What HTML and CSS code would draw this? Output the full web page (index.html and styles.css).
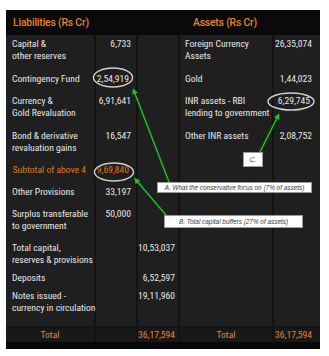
FILE: index.html
```html
<!DOCTYPE html>
<html>
<head>
<meta charset="utf-8">
<link rel="stylesheet" href="styles.css">
</head>
<body>
<div class="sheet">
  <div class="panel">
    <div class="head">
      <div class="h-liab">Liabilities (Rs Cr)</div>
      <div class="h-assets">Assets (Rs Cr)</div>
    </div>
    <div class="grid">
      <div class="c lab">Capital &amp;<br>other reserves</div>
      <div class="c v2">6,733</div>
      <div class="c v3"></div>
      <div class="c lab4">Foreign Currency<br>Assets</div>
      <div class="c v5">26,35,074</div>

      <div class="c lab">Contingency Fund</div>
      <div class="c v2 ring">2,54,919</div>
      <div class="c v3"></div>
      <div class="c lab4">Gold</div>
      <div class="c v5">1,44,023</div>

      <div class="c lab">Currency &amp;<br>Gold Revaluation</div>
      <div class="c v2">6,91,641</div>
      <div class="c v3"></div>
      <div class="c lab4">INR assets - RBI<br>lending to government</div>
      <div class="c v5 ring5">6,29,745</div>

      <div class="c lab">Bond &amp; derivative<br>revaluation gains</div>
      <div class="c v2">16,547</div>
      <div class="c v3"></div>
      <div class="c lab4">Other INR assets</div>
      <div class="c v5">2,08,752</div>

      <div class="c lab sub">Subtotal of above 4</div>
      <div class="c v2 ring orange">9,69,840</div>
      <div class="c v3"></div>
      <div class="c lab4"></div>
      <div class="c v5"></div>

      <div class="c lab">Other Provisions</div>
      <div class="c v2">33,197</div>
      <div class="c v3"></div>
      <div class="c lab4"></div>
      <div class="c v5"></div>

      <div class="c lab">Surplus transferable<br>to government</div>
      <div class="c v2">50,000</div>
      <div class="c v3"></div>
      <div class="c lab4"></div>
      <div class="c v5"></div>

      <div class="c lab">Total capital,<br>reserves &amp; provisions</div>
      <div class="c v2"></div>
      <div class="c v3">10,53,037</div>
      <div class="c lab4"></div>
      <div class="c v5"></div>

      <div class="c lab">Deposits</div>
      <div class="c v2"></div>
      <div class="c v3">6,52,597</div>
      <div class="c lab4"></div>
      <div class="c v5"></div>

      <div class="c lab">Notes issued -<br>currency in circulation</div>
      <div class="c v2"></div>
      <div class="c v3">19,11,960</div>
      <div class="c lab4"></div>
      <div class="c v5"></div>

      <div class="c tot center">Total</div>
      <div class="c tot"></div>
      <div class="c tot v3">36,17,594</div>
      <div class="c tot center">Total</div>
      <div class="c tot v5">36,17,594</div>
    </div>
    <div class="foot"></div>
  </div>

  <svg class="overlay" width="329" height="356" viewBox="0 0 329 356">
    <defs>
      <marker id="ah" markerWidth="6" markerHeight="6" refX="3" refY="3" orient="auto" markerUnits="userSpaceOnUse">
        <path d="M0,0 L6,3 L0,6 Z" fill="#21c021"/>
      </marker>
    </defs>
    <ellipse cx="113" cy="77.5" rx="19.5" ry="9.5" fill="none" stroke="#cfcfcf" stroke-width="1.4"/>
    <ellipse cx="114" cy="172" rx="19.5" ry="9" fill="none" stroke="#cfcfcf" stroke-width="1.4"/>
    <ellipse cx="291" cy="101.5" rx="23" ry="8.5" fill="none" stroke="#cfcfcf" stroke-width="1.4"/>
    <line x1="169" y1="182" x2="134" y2="91" stroke="#21c021" stroke-width="1.5" marker-end="url(#ah)"/>
    <line x1="166" y1="215" x2="136" y2="180" stroke="#21c021" stroke-width="1.5" marker-end="url(#ah)"/>
    <line x1="260" y1="152" x2="278" y2="116" stroke="#21c021" stroke-width="1.5" marker-end="url(#ah)"/>
  </svg>

  <div class="note note-c">C.</div>
  <div class="note note-a">A. What the conservative focus on (7% of assets)</div>
  <div class="note note-b">B. Total capital buffers (27% of assets)</div>
</div>
</body>
</html>
```

FILE: styles.css
```css
html, body {
  margin: 0;
  padding: 0;
  background: #ffffff;
}

.sheet {
  position: relative;
  width: 329px;
  height: 356px;
  overflow: hidden;
  font-family: Roboto, "Liberation Sans", sans-serif;
}

.panel {
  margin: 10px 0 0 6px;
  width: 314px;
  background: #0b0b0b;
}

.head {
  display: grid;
  grid-template-columns: 174px 140px;
  height: 25px;
  align-items: center;
  background: #0a0a0a;
  color: #e8822e;
  font-size: 10.3px;
  font-weight: 500;
  letter-spacing: -0.15px;
}

.h-liab {
  padding-left: 7px;
}

.h-assets {
  padding-left: 13px;
}

.grid {
  display: grid;
  grid-template-columns: 88px 40px 40px 92px 46px;
  grid-template-rows: 35px 22px 35px 34px 22px 22px 34px 30px 18px 39px 16px;
  column-gap: 2px;
  background: #131313;
  color: #e6e6e6;
  font-family: "Liberation Sans Narrow", "Roboto Condensed", Roboto, sans-serif;
  font-size: 9.6px;
  line-height: 12px;
}

.c {
  background: #1f1f1f;
  padding-top: 3px;
  white-space: nowrap;
}

.lab {
  padding-left: 6px;
}

.lab4 {
  padding-left: 5px;
}

.v2 {
  text-align: right;
  padding-right: 5px;
}

.v2.ring {
  padding-right: 7px;
}

.v3 {
  text-align: right;
  padding-right: 3px;
}

.v5 {
  text-align: right;
  padding-right: 8px;
}

.v5.ring5 {
  padding-right: 10px;
}

.sub {
  color: #dc7a2c;
  text-align: right;
  padding-right: 8px;
}

.orange {
  color: #dc7a2c;
}

.tot {
  background: #181818;
  color: #e8822e;
  padding-top: 0;
  border-top: 1px solid #101010;
  box-sizing: border-box;
  line-height: 15px;
}

.center {
  text-align: center;
}

.foot {
  height: 7px;
  background: #070707;
}

.overlay {
  position: absolute;
  left: 0;
  top: 0;
}

.note {
  position: absolute;
  box-sizing: border-box;
  background: #ffffff;
  border: 1px solid #9a9a9a;
  color: #3a3a3a;
  font-family: "Liberation Sans", Arial, sans-serif;
  font-style: italic;
  font-size: 6.4px;
  white-space: nowrap;
  display: flex;
  align-items: center;
  justify-content: center;
}

.note-c {
  left: 243px;
  top: 152px;
  width: 20px;
  height: 15px;
  font-size: 7px;
}

.note-a {
  left: 157px;
  top: 182px;
  width: 155px;
  height: 11px;
}

.note-b {
  left: 164px;
  top: 215px;
  width: 139px;
  height: 13px;
}
```
